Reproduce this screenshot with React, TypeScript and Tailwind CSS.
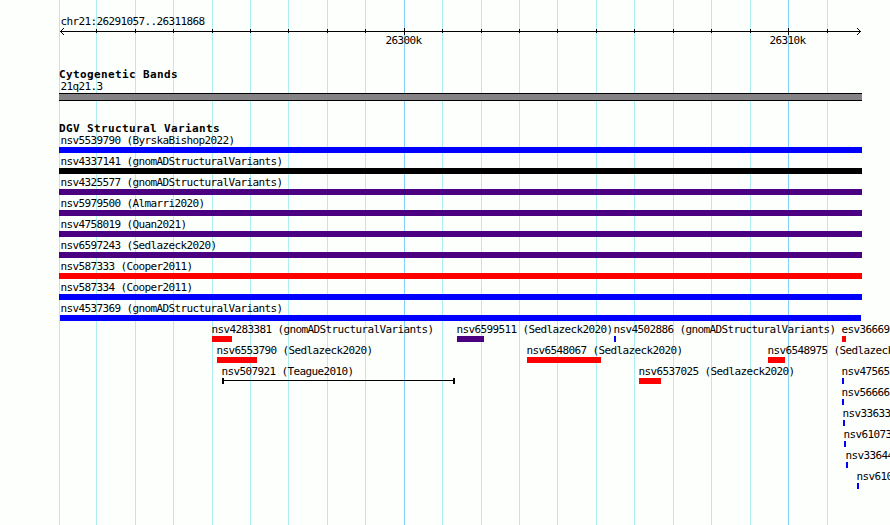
import React from 'react';
import clsx from 'clsx';

interface Feature {
  name: string;
  start: number;
  width: number;
  color: string;
  line?: boolean;
}

const BLUE = 'bg-[#0000ff]';
const RED = 'bg-[#ff0000]';
const INDIGO = 'bg-[#4b0082]';
const BLACK = 'bg-black';

const minorLines = [59, 96, 135, 173, 212, 250, 288, 327, 365, 442, 481, 519, 557, 596, 634, 673, 711, 750, 827];
const majorLines = [404, 788];

const spanning: Feature[] = [
  { name: 'nsv5539790 (ByrskaBishop2022)', start: 59, width: 803, color: BLUE },
  { name: 'nsv4337141 (gnomADStructuralVariants)', start: 59, width: 803, color: BLACK },
  { name: 'nsv4325577 (gnomADStructuralVariants)', start: 59, width: 803, color: INDIGO },
  { name: 'nsv5979500 (Almarri2020)', start: 59, width: 803, color: INDIGO },
  { name: 'nsv4758019 (Quan2021)', start: 59, width: 803, color: INDIGO },
  { name: 'nsv6597243 (Sedlazeck2020)', start: 59, width: 803, color: INDIGO },
  { name: 'nsv587333 (Cooper2011)', start: 59, width: 803, color: RED },
  { name: 'nsv587334 (Cooper2011)', start: 59, width: 803, color: BLUE },
  { name: 'nsv4537369 (gnomADStructuralVariants)', start: 60, width: 801, color: BLUE },
];

const packed: Feature[][] = [
  [
    { name: 'nsv4283381 (gnomADStructuralVariants)', start: 212, width: 20, color: RED },
    { name: 'nsv6599511 (Sedlazeck2020)', start: 457, width: 27, color: INDIGO },
    { name: 'nsv4502886 (gnomADStructuralVariants)', start: 614, width: 2, color: BLUE },
    { name: 'esv36669', start: 842, width: 4, color: RED },
  ],
  [
    { name: 'nsv6553790 (Sedlazeck2020)', start: 217, width: 40, color: RED },
    { name: 'nsv6548067 (Sedlazeck2020)', start: 527, width: 74, color: RED },
    { name: 'nsv6548975 (Sedlazeck', start: 768, width: 17, color: RED },
  ],
  [
    { name: 'nsv507921 (Teague2010)', start: 222, width: 233, color: BLACK, line: true },
    { name: 'nsv6537025 (Sedlazeck2020)', start: 639, width: 22, color: RED },
    { name: 'nsv47565', start: 842, width: 2, color: BLUE },
  ],
  [{ name: 'nsv56666', start: 842, width: 2, color: BLUE }],
  [{ name: 'nsv33633', start: 843, width: 2, color: BLUE }],
  [{ name: 'nsv61073', start: 844, width: 2, color: BLUE }],
  [{ name: 'nsv33644', start: 846, width: 2, color: BLUE }],
  [{ name: 'nsv610', start: 857, width: 2, color: BLUE }],
];

const Label: React.FC<{ children: React.ReactNode; className?: string }> = ({ children, className }) => (
  <div
    className={clsx(
      "h-[13px] whitespace-pre font-['DejaVu_Sans_Mono',monospace] text-[11px] leading-[13px] tracking-[-0.622px]",
      className
    )}
  >
    {children}
  </div>
);

const TrackTitle: React.FC<{ children: React.ReactNode }> = ({ children }) => (
  <h2 className="ml-[59px] h-[13px] whitespace-pre font-['DejaVu_Sans_Mono',monospace] text-[11px] font-bold leading-[13px] tracking-[0.378px]">
    {children}
  </h2>
);

const GridLines = () => (
  <div className="absolute inset-0 -z-10">
    {minorLines.map((x) => (
      <div key={x} className="absolute inset-y-0 w-px bg-[#afeeee]" style={{ left: x }} />
    ))}
    {majorLines.map((x) => (
      <div key={x} className="absolute inset-y-0 w-px bg-[#87cefa]" style={{ left: x }} />
    ))}
  </div>
);

const Ruler = () => (
  <svg className="block h-[8px] w-full" viewBox="0 0 890 8" shapeRendering="crispEdges">
    <rect x="60" y="4" width="801" height="1" />
    {minorLines.slice(1).map((x) => (
      <rect key={x} x={x} y="2" width="1" height="4" />
    ))}
    {majorLines.map((x) => (
      <rect key={x} x={x} y="1" width="1" height="7" />
    ))}
    <path d="M61 3h1v1h-1zM62 2h1v1h-1zM63 1h1v1h-1zM61 5h1v1h-1zM62 6h1v1h-1zM63 7h1v1h-1z" />
    <path d="M859 3h1v1h-1zM858 2h1v1h-1zM857 1h1v1h-1zM859 5h1v1h-1zM858 6h1v1h-1zM857 7h1v1h-1z" />
  </svg>
);

const Glyph: React.FC<{ feature: Feature }> = ({ feature }) => {
  if (feature.line) {
    return (
      <div className="flex h-[6px] border-x-2 border-black" style={{ width: feature.width }}>
        <div className="mt-[2px] h-px w-full bg-black" />
      </div>
    );
  }
  return <div className={clsx('h-[6px]', feature.color)} style={{ width: feature.width }} />;
};

export default function App() {
  return (
    <main className="relative isolate h-[525px] w-[890px] overflow-hidden bg-[#fdfffd] text-black">
      <GridLines />

      <header className="h-[68px] pt-[15px]">
        <Label className="-mb-px ml-[60.5px]">chr21:26291057..26311868</Label>
        <Ruler />
        <div className="-mt-px flex pl-[385.5px]">
          <Label className="w-[384px]">26300k</Label>
          <Label>26310k</Label>
        </div>
      </header>

      <section className="h-[54px]">
        <TrackTitle>Cytogenetic Bands</TrackTitle>
        <Label className="-mt-px ml-[60.5px]">21q21.3</Label>
        <div className="ml-[59px] h-[8px] w-[803px] border-y border-black bg-[#848284]" />
      </section>

      <section>
        <TrackTitle>DGV Structural Variants</TrackTitle>
        <div className="-mt-px">
          {spanning.map((f) => (
            <div key={f.name} className="h-[21px]">
              <Label className="ml-[60.5px]">{f.name}</Label>
              <div style={{ marginLeft: f.start }}>
                <Glyph feature={f} />
              </div>
            </div>
          ))}
          {packed.map((row, i) => (
            <div key={i} className="relative h-[21px]">
              {row.map((f) => (
                <div key={f.name} className="absolute top-0" style={{ left: f.start }}>
                  <Label className="-ml-[0.5px]">{f.name}</Label>
                  <Glyph feature={f} />
                </div>
              ))}
            </div>
          ))}
        </div>
      </section>
    </main>
  );
}
